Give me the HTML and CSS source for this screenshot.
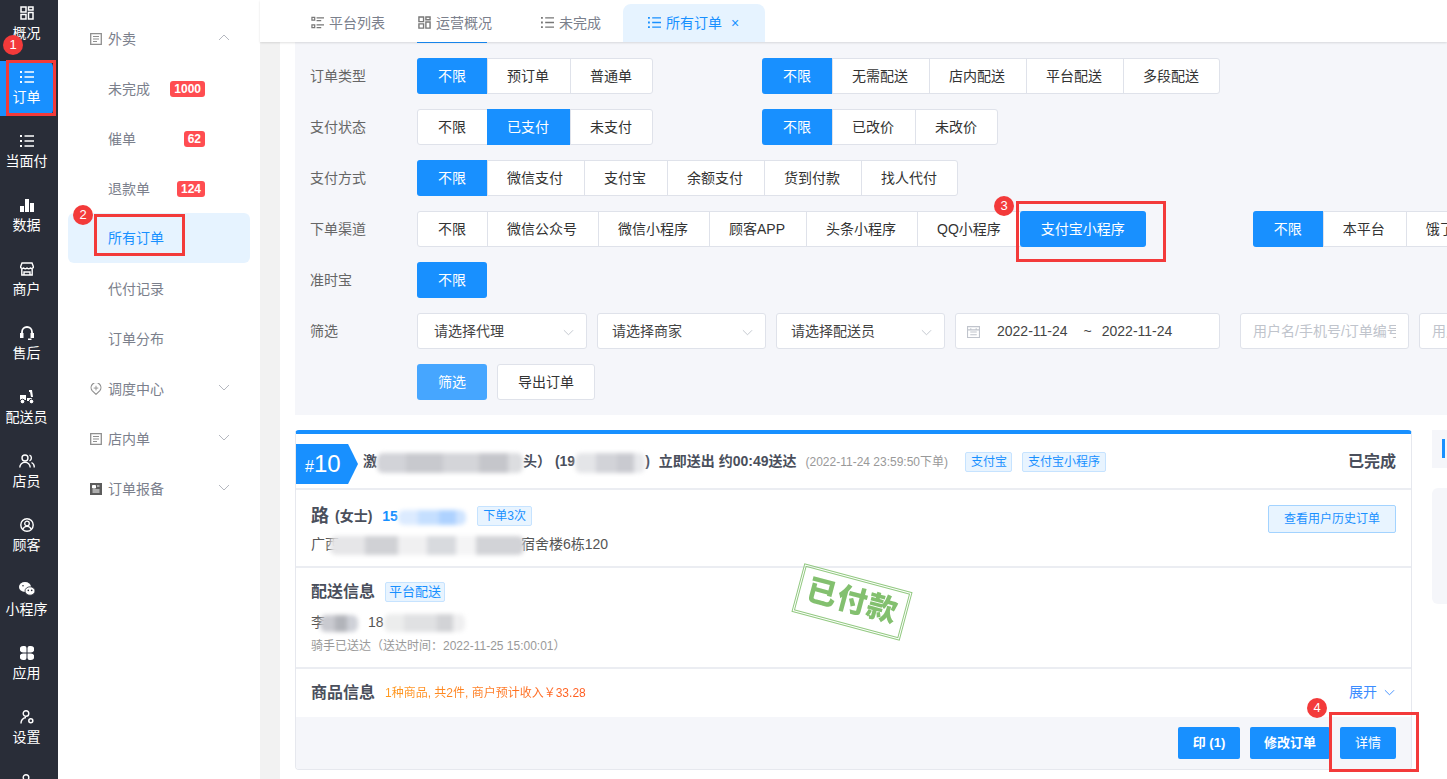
FILE: index.html
```html
<!DOCTYPE html>
<html lang="zh-CN">
<head>
<meta charset="utf-8">
<title>所有订单</title>
<link rel="stylesheet" href="styles.css">
</head>
<body>
<svg class="defs" aria-hidden="true">
  <symbol id="i-grid" viewBox="0 0 14 14"><path d="M1 1h5v5H1zM8.500 1H13v3H8.500zM8.500 6.500H13V13H8.500zM1 8.500h5V13H1z" fill="none" stroke="currentColor" stroke-width="1.500"/></symbol>
  <symbol id="i-list" viewBox="0 0 14 14"><path d="M4.500 2H14M4.500 7H14M4.500 12H14" stroke="currentColor" stroke-width="1.500"/><path d="M0 1h2v2H0zM0 6h2v2H0zM0 11h2v2H0z" fill="currentColor"/></symbol>
  <symbol id="i-rows" viewBox="0 0 14 14"><path d="M1 1.500h3v3H1zM1 9.500h3v3H1z" fill="none" stroke="currentColor" stroke-width="1.300"/><path d="M6 2h8M6 5h5M6 9.500h8M6 12.500h5" stroke="currentColor" stroke-width="1.300"/></symbol>
  <symbol id="i-bars" viewBox="0 0 14 14"><path d="M0 8h4v6H0zM5 1h4v13H5zM10 5h4v9h-4z" fill="currentColor"/></symbol>
  <symbol id="i-shop" viewBox="0 0 14 14"><path d="M2 1h10l1.500 4a2 2 0 0 1-3.200 1 2.400 2.400 0 0 1-3.300 0 2.400 2.400 0 0 1-3.300 0A2 2 0 0 1 .5 5zM1.800 7v6h10.400V7M4 13v-3h6v3" fill="none" stroke="currentColor" stroke-width="1.400"/></symbol>
  <symbol id="i-head" viewBox="0 0 14 14"><path d="M2 8V6a5 5 0 0 1 10 0v2" fill="none" stroke="currentColor" stroke-width="1.800"/><path d="M0 7h3.500v5H0zM10.500 7H14v5h-3.500zM8 12.500h3.500V14H8z" fill="currentColor"/></symbol>
  <symbol id="i-ride" viewBox="0 0 16 14"><path d="M1 5h6v5H1zM10 0h3l1 7h-2l-1-5h-1zM8 8h5v3H8z" fill="currentColor"/><circle cx="3.500" cy="11.500" r="2.300" fill="currentColor" stroke="#292d38"/><circle cx="12.500" cy="11.500" r="2.300" fill="currentColor" stroke="#292d38"/></symbol>
  <symbol id="i-users" viewBox="0 0 16 14"><circle cx="6" cy="4" r="3" fill="none" stroke="currentColor" stroke-width="1.400"/><path d="M.8 13.500a5.200 5.200 0 0 1 10.400 0M10.500 1.200a3 3 0 0 1 0 5.600M12.500 8.500a5 5 0 0 1 2.700 5" fill="none" stroke="currentColor" stroke-width="1.400"/></symbol>
  <symbol id="i-cust" viewBox="0 0 14 14"><circle cx="7" cy="7" r="6.200" fill="none" stroke="currentColor" stroke-width="1.400"/><circle cx="7" cy="5.500" r="2.300" fill="none" stroke="currentColor" stroke-width="1.300"/><path d="M3 11a4.300 4.300 0 0 1 8 0" fill="none" stroke="currentColor" stroke-width="1.300"/></symbol>
  <symbol id="i-chat" viewBox="0 0 16 14"><ellipse cx="6" cy="5" rx="6" ry="5" fill="currentColor"/><ellipse cx="11" cy="9" rx="5" ry="4.200" fill="currentColor" stroke="#292d38" stroke-width=".8"/><circle cx="9.300" cy="8.400" r=".8" fill="#292d38"/><circle cx="12.700" cy="8.400" r=".8" fill="#292d38"/><circle cx="4" cy="3.800" r=".8" fill="#292d38"/></symbol>
  <symbol id="i-apps" viewBox="0 0 14 14"><path d="M3 0h1.500a2 2 0 0 1 2 2v4.500H3a3 3 0 0 1 0-6.500zM11 0H9.500a2 2 0 0 0-2 2v4.500H11A3 3 0 0 0 11 0zM3 14h1.500a2 2 0 0 0 2-2V7.500H3A3 3 0 0 0 3 14zM11 14H9.500a2 2 0 0 1-2-2V7.500H11a3 3 0 0 1 0 6.500z" fill="currentColor"/></symbol>
  <symbol id="i-set" viewBox="0 0 14 14"><circle cx="6" cy="3.500" r="2.800" fill="none" stroke="currentColor" stroke-width="1.400"/><path d="M1 13.500a5.500 5.500 0 0 1 5-6" fill="none" stroke="currentColor" stroke-width="1.400"/><circle cx="10.800" cy="10.800" r="2" fill="none" stroke="currentColor" stroke-width="1.500"/></symbol>
  <symbol id="i-doc" viewBox="0 0 12 12"><path d="M.7.7h10.600v10.600H.7z" fill="none" stroke="currentColor" stroke-width="1.300"/><path d="M3 3.500h6M3 6h6M3 8.500h4" stroke="currentColor" stroke-width="1"/></symbol>
  <symbol id="i-pin" viewBox="0 0 12 13"><path d="M6 12.300 1.800 8.200a5.300 5.300 0 1 1 8.400 0z" fill="none" stroke="currentColor" stroke-width="1.200"/><path d="M3.500 5.500h5M6 3v5" stroke="currentColor" stroke-width="1"/></symbol>
  <symbol id="i-report" viewBox="0 0 12 12"><path d="M0 0h12v12H0z" fill="currentColor"/><path d="M2.500 2.500h3v2.500h-3zM7 3h2.500M2.500 7h7M2.500 9h7" stroke="#fff" fill="#fff" stroke-width="1"/></symbol>
  <symbol id="i-down" viewBox="0 0 12 7"><path d="M1 1l5 5 5-5" fill="none" stroke="currentColor" stroke-width="1"/></symbol>
  <symbol id="i-up" viewBox="0 0 12 7"><path d="M1 6l5-5 5 5" fill="none" stroke="currentColor" stroke-width="1"/></symbol>
  <symbol id="i-cal" viewBox="0 0 12 12"><path d="M.5 1.500h11v10H.5zM.5 4.500h11M3 3.500h1M8 3.500h1M3 6.500h6M3 9h6" fill="none" stroke="currentColor" stroke-width="1"/></symbol>
</svg>

<div class="app">
  <nav class="rail">
    <a class="rail-item"><svg class="rail-ico"><use href="#i-grid"/></svg>概况</a>
    <a class="rail-item is-active"><svg class="rail-ico"><use href="#i-list"/></svg>订单</a>
    <a class="rail-item"><svg class="rail-ico"><use href="#i-list"/></svg>当面付</a>
    <a class="rail-item"><svg class="rail-ico"><use href="#i-bars"/></svg>数据</a>
    <a class="rail-item"><svg class="rail-ico"><use href="#i-shop"/></svg>商户</a>
    <a class="rail-item"><svg class="rail-ico"><use href="#i-head"/></svg>售后</a>
    <a class="rail-item"><svg class="rail-ico rail-ico-w"><use href="#i-ride"/></svg>配送员</a>
    <a class="rail-item"><svg class="rail-ico rail-ico-w"><use href="#i-users"/></svg>店员</a>
    <a class="rail-item"><svg class="rail-ico"><use href="#i-cust"/></svg>顾客</a>
    <a class="rail-item"><svg class="rail-ico rail-ico-w"><use href="#i-chat"/></svg>小程序</a>
    <a class="rail-item"><svg class="rail-ico"><use href="#i-apps"/></svg>应用</a>
    <a class="rail-item"><svg class="rail-ico"><use href="#i-set"/></svg>设置</a>
    <a class="rail-item"><svg class="rail-ico"><use href="#i-set"/></svg></a>
  </nav>

  <aside class="subnav">
    <div class="sub-item sub-head"><svg class="sub-ico"><use href="#i-doc"/></svg>外卖<svg class="chev"><use href="#i-up"/></svg></div>
    <div class="sub-item sub-child">未完成<span class="badge">1000</span></div>
    <div class="sub-item sub-child">催单<span class="badge">62</span></div>
    <div class="sub-item sub-child">退款单<span class="badge">124</span></div>
    <div class="sub-item sub-child is-current">所有订单</div>
    <div class="sub-item sub-child">代付记录</div>
    <div class="sub-item sub-child">订单分布</div>
    <div class="sub-item sub-head"><svg class="sub-ico"><use href="#i-pin"/></svg>调度中心<svg class="chev"><use href="#i-down"/></svg></div>
    <div class="sub-item sub-head"><svg class="sub-ico"><use href="#i-doc"/></svg>店内单<svg class="chev"><use href="#i-down"/></svg></div>
    <div class="sub-item sub-head"><svg class="sub-ico sub-ico-dark"><use href="#i-report"/></svg>订单报备<svg class="chev"><use href="#i-down"/></svg></div>
  </aside>

  <main class="main">
    <div class="tabs">
      <div class="tab tab-a"><svg class="tab-ico"><use href="#i-rows"/></svg>平台列表</div>
      <div class="tab tab-b"><svg class="tab-ico"><use href="#i-grid"/></svg>运营概况</div>
      <div class="tab tab-c"><svg class="tab-ico"><use href="#i-list"/></svg>未完成</div>
      <div class="tab tab-on"><svg class="tab-ico"><use href="#i-list"/></svg>所有订单<span class="tab-x">×</span></div>
    </div>
    <div class="body">
      <div class="gutter"></div>
      <div class="page">
        <section class="filters">
          <div class="edge"></div>
          <div class="row">
            <div class="label">订单类型</div>
            <div class="seg"><span class="opt on">不限</span><span class="opt">预订单</span><span class="opt">普通单</span></div>
            <div class="seg"><span class="opt on">不限</span><span class="opt">无需配送</span><span class="opt">店内配送</span><span class="opt">平台配送</span><span class="opt">多段配送</span></div>
          </div>
          <div class="row">
            <div class="label">支付状态</div>
            <div class="seg"><span class="opt">不限</span><span class="opt on">已支付</span><span class="opt">未支付</span></div>
            <div class="seg"><span class="opt on">不限</span><span class="opt">已改价</span><span class="opt">未改价</span></div>
          </div>
          <div class="row">
            <div class="label">支付方式</div>
            <div class="seg"><span class="opt on">不限</span><span class="opt">微信支付</span><span class="opt">支付宝</span><span class="opt">余额支付</span><span class="opt">货到付款</span><span class="opt">找人代付</span></div>
          </div>
          <div class="row row-channel">
            <div class="label">下单渠道</div>
            <div class="seg"><span class="opt">不限</span><span class="opt">微信公众号</span><span class="opt">微信小程序</span><span class="opt">顾客APP</span><span class="opt">头条小程序</span><span class="opt">QQ小程序</span><span class="opt on opt-end">支付宝小程序</span></div>
            <div class="seg"><span class="opt on">不限</span><span class="opt">本平台</span><span class="opt">饿了么</span></div>
          </div>
          <div class="row">
            <div class="label">准时宝</div>
            <div class="seg"><span class="opt on solo">不限</span></div>
          </div>
          <div class="row">
            <div class="label">筛选</div>
            <div class="field field-first">请选择代理<svg class="field-chev"><use href="#i-down"/></svg></div>
            <div class="field">请选择商家<svg class="field-chev"><use href="#i-down"/></svg></div>
            <div class="field">请选择配送员<svg class="field-chev"><use href="#i-down"/></svg></div>
            <div class="field field-date"><svg class="cal"><use href="#i-cal"/></svg><span>2022-11-24</span><span class="tilde">~</span><span>2022-11-24</span></div>
            <div class="field field-input field-gap"><span class="clip">用户名/手机号/订单编号</span></div>
            <div class="field field-input"><span class="clip">用户名/手机号/订单编号</span></div>
          </div>
          <div class="row">
            <div class="label"></div>
            <button class="btn btn-soft">筛选</button>
            <button class="btn btn-line">导出订单</button>
          </div>
        </section>

        <div class="orders">
          <article class="card">
            <header class="c-head">
              <div class="flag"><small>#</small>10</div>
              <div class="c-title">激<i class="mask mask-a"></i>头） (19<i class="mask mask-b"></i>)<span class="c-when">立即送出 约00:49送达</span></div>
              <span class="c-date">(2022-11-24 23:59:50下单)</span>
              <span class="tag tag-a">支付宝</span>
              <span class="tag">支付宝小程序</span>
              <span class="c-status">已完成</span>
            </header>
            <section class="c-user">
              <div class="u-main">
                <div class="u-line"><b class="u-name">路</b><b class="u-sex">(女士)</b><b class="u-phone">15<i class="mask mask-c"></i></b><span class="tag tag-blue">下单3次</span></div>
                <div class="u-addr">广西<i class="mask mask-d"></i>宿舍楼6栋120</div>
              </div>
              <button class="hist">查看用户历史订单</button>
            </section>
            <section class="c-ship">
              <div class="s-title"><h3>配送信息</h3><span class="tag tag-ship">平台配送</span></div>
              <div class="s-person">李<i class="mask mask-e"></i><span class="s-phone">18<i class="mask mask-f"></i></span></div>
              <div class="s-note">骑手已送达（送达时间：2022-11-25 15:00:01）</div>
            </section>
            <section class="c-goods">
              <h3>商品信息</h3>
              <span class="g-sum">1种商品, 共2件, 商户预计收入￥33.28</span>
              <span class="g-more">展开<svg class="g-chev"><use href="#i-down"/></svg></span>
            </section>
            <footer class="c-foot">
              <button class="act act-print">印 (1)</button>
              <button class="act act-edit">修改订单</button>
              <button class="act act-detail">详情</button>
            </footer>
            <div class="stamp"><span>已付款</span></div>
          </article>
          <aside class="side">
            <div class="side-top"><i></i></div>
            <div class="side-box"></div>
          </aside>
        </div>
      </div>
    </div>
  </main>
</div>

<div class="mark mark-1"></div><div class="num num-1">1</div>
<div class="mark mark-2"></div><div class="num num-2">2</div>
<div class="mark mark-3"></div><div class="num num-3">3</div>
<div class="mark mark-4"></div><div class="num num-4">4</div>
</body>
</html>
```

FILE: styles.css
```css
* { box-sizing: border-box; }
html, body { margin: 0; height: 100%; overflow: hidden; background: #fff; }
body { font: 14px/20px "Liberation Sans", "Noto Sans CJK SC", sans-serif; color: #333; position: relative; }
i { font-style: normal; }
h3 { margin: 0; font-size: 16px; font-weight: 700; color: #4a4f5c; line-height: 22px; }
button { font: inherit; cursor: pointer; }
.defs { position: absolute; width: 0; height: 0; }

.app { display: flex; height: 779px; overflow: hidden; }

/* icon rail */
.rail { width: 58px; flex: none; background: #292d38; color: #fff; overflow: hidden; }
.rail-item { display: flex; flex-direction: column; align-items: center; height: 64px; width: 53px; padding-top: 9px; font-size: 14px; line-height: 20px; border-radius: 0 6px 6px 0; }
.rail-item:first-child { margin-top: -1px; height: 62px; padding-top: 7px; }
.rail-item.is-active { background: #1890ff; height: 55px; margin-bottom: 9px; }
.rail-ico { width: 14px; height: 14px; margin-bottom: 3px; }
.rail-ico-w { width: 16px; }

/* sub navigation */
.subnav { width: 202px; flex: none; background: #fff; padding: 14px 10px 0; }
.sub-item { height: 50px; display: flex; align-items: center; color: #7b808c; position: relative; border-radius: 6px; }
.sub-head { padding-left: 22px; }
.sub-child { padding-left: 40px; }
.sub-ico { width: 12px; height: 12px; margin-right: 6px; color: #8f8f8f; }
.sub-ico-dark { color: #5c5c5c; }
.chev { position: absolute; left: 150px; top: 20px; width: 12px; height: 7px; color: #b4b7bf; }
.badge { position: absolute; right: 45px; top: 17px; height: 16px; padding: 0 4px; background: #ff4d51; color: #fff; font-size: 12px; font-weight: 700; line-height: 16px; border-radius: 3px; }
.is-current { background: #e6f3ff; color: #1890ff; margin: -1px 0 1px; }

/* main */
.main { flex: 1; min-width: 0; display: flex; flex-direction: column; }
.tabs { height: 42px; flex: none; display: flex; align-items: flex-end; background: #fff; box-shadow: 0 1px 2px rgba(0, 0, 0, .12); position: relative; z-index: 1; }
.tab { height: 38px; display: flex; align-items: center; color: #7b808c; padding-bottom: 1px; }
.tab-ico { width: 13px; height: 13px; margin-right: 5px; color: #777; }
.tab-a { margin-left: 51px; }
.tab-b { margin-left: 33px; }
.tab-c { margin-left: 49px; }
.tab-on { margin-left: 22px; width: 142px; padding-left: 25px; background: #e6f3ff; color: #1890ff; border-radius: 8px 8px 0 0; }
.tab-on .tab-ico { color: #1890ff; }
.tab-x { margin-left: 9px; font-size: 14px; }

.body { flex: 1; display: flex; min-height: 0; }
.gutter { width: 20px; flex: none; background: #f2f2f2; }
.page { flex: 1; min-width: 0; padding-left: 15px; overflow: hidden; }

/* filter panel */
.filters { background: #f5f6fa; padding-bottom: 15px; height: 373px; }
.edge { width: 70px; height: 1px; margin: 0 0 15px 122px; background: #1890ff; }
.row { display: flex; align-items: center; height: 36px; margin-bottom: 15px; padding-left: 15px; white-space: nowrap; }
.row:last-child { margin-bottom: 0; }
.label { width: 107px; flex: none; color: #666; }
.seg + .seg { margin-left: 109px; }
.row-channel .seg + .seg { margin-left: 107px; }

.seg { display: flex; flex: none; height: 36px; background: #fff; border: 1px solid #dfe2ea; border-radius: 3px; }
.opt { display: flex; align-items: center; justify-content: center; padding: 0 21px 0 19px; height: 34px; color: #333; border-left: 1px solid #dfe2ea; }
.opt:last-child { padding-right: 20px; }
.opt:first-child { border-left: 0; border-radius: 3px 0 0 3px; padding: 0 21px 0 20px; }
.opt.on { background: #1890ff; color: #fff; height: 36px; margin: -1px 0; border-left: 0; padding: 0 21px 0 20px; }
.opt:first-child.on { margin-left: -1px; padding: 0 21px; }
.opt.solo { border-radius: 3px; margin-right: -1px; }
.opt.opt-end { border-radius: 3px; margin-left: -2px; padding: 0 21px; margin-right: -1px; }

.field { flex: none; width: 169px; height: 36px; display: flex; align-items: center; padding-left: 14px; background: #fff; border: 1px solid #dfe2ea; border-radius: 3px; color: #444; position: relative; }
.field + .field { margin-left: 10px; }
.field-first { width: 170px; padding-left: 16px; }
.field-chev { position: absolute; right: 12px; top: 15px; width: 11px; height: 7px; color: #c0c4cc; }
.field-date { width: 265px; padding-left: 11px; }
.cal { width: 13px; height: 13px; margin-right: 17px; color: #c0c4cc; }
.tilde { margin: 0 10px 0 16px; }
.field + .field-gap { margin-left: 20px; }
.field-input { padding: 0 12px; color: #c0c4cc; overflow: hidden; }
.clip { display: block; overflow: hidden; white-space: nowrap; }

.btn { height: 36px; border-radius: 3px; padding: 0; }
.btn + .btn { margin-left: 10px; }
.btn-soft { width: 70px; background: #46a6ff; border: 0; color: #fff; }
.btn-line { width: 98px; background: #fff; border: 1px solid #dfe2ea; color: #333; }

/* order card */
.orders { display: flex; gap: 20px; margin-top: 15px; align-items: flex-start; }
.card { width: 1117px; flex: none; height: 340px; border: 1px solid #e6e8ee; border-top: 4px solid #1890ff; border-radius: 4px; position: relative; display: flex; flex-direction: column; overflow: hidden; }
.c-head { height: 56px; flex: none; display: flex; align-items: center; border-bottom: 2px solid #ebedf2; white-space: nowrap; padding-top: 2px; }
.flag { width: 62px; height: 40px; margin-top: 4px; padding-left: 9px; background: #1890ff; color: #fff; font-size: 24px; line-height: 40px; clip-path: polygon(0 0, 84% 0, 100% 50%, 84% 100%, 0 100%); }
.flag small { font-size: 16px; }
.c-title { margin-left: 5px; font-weight: 700; color: #4a4f5c; white-space: pre; }
.c-when { margin-left: 9px; }
.c-date { margin-left: 9px; font-size: 12px; color: #999; }
.tag { display: inline-block; height: 20px; padding: 0 5px; border: 1px solid #c6e3ff; background: #e8f4ff; color: #1890ff; font-size: 12px; line-height: 18px; border-radius: 2px; }
.tag-a { width: 47px; margin-left: 17px; margin-right: 10px; }
.tag-blue { width: 55px; }
.c-status { margin-left: auto; margin-right: 15px; font-size: 16px; font-weight: 700; color: #4a4f5c; }

.mask { display: inline-block; vertical-align: middle; filter: blur(2px); border-radius: 6px; position: relative; z-index: 1; }
.mask-a { width: 146px; height: 20px; background: linear-gradient(90deg, #d2d3d8 0 20%, #c8c9ce 20% 45%, #d4d5d9 45% 70%, #c5c6cb 70% 90%, #dcdde0 90%); }
.mask-b { width: 70px; height: 20px; background: linear-gradient(90deg, #e4e5e8 0 30%, #d2d3d8 30% 60%, #c9cad0 60% 85%, #e8e9ec 85%); }
.mask-c { width: 68px; height: 15px; background: linear-gradient(90deg, #dcebff 0 30%, #c5dfff 30% 60%, #aed2ff 60% 85%, #cfe4ff 85%); }
.mask-d { width: 194px; height: 19px; margin: 0 -3px 0 -9px; background: linear-gradient(90deg, #e6e6e8 0 18%, #d0d1d5 18% 35%, #f0f0f1 35% 50%, #d8dade 50% 65%, #f4f4f5 65% 75%, #d2d3d7 75%); }
.mask-e { width: 38px; height: 17px; margin-left: -5px; background: linear-gradient(90deg, #c9cad0 0 40%, #b2b4ba 40% 70%, #cfd1d8 70%); }
.mask-f { width: 81px; height: 18px; background: linear-gradient(90deg, #eceded 0 25%, #e0e1e3 25% 65%, #d2d3d6 65% 85%, #efeff0 85%); }

.c-user { height: 78px; flex: none; display: flex; justify-content: space-between; padding: 15px 15px 0; border-bottom: 2px solid #ebedf2; }
.u-line { display: flex; align-items: center; height: 22px; }
.u-name { font-size: 18px; color: #4a4f5c; margin-right: 6px; }
.u-sex { font-size: 14px; color: #4a4f5c; margin-right: 10px; }
.u-phone { color: #1890ff; width: 95px; white-space: nowrap; }
.u-addr { margin-top: 7px; color: #555; white-space: nowrap; }
.hist { width: 128px; height: 28px; padding: 0; background: #e8f4ff; border: 1px solid #a3d3ff; color: #1890ff; font-size: 12px; border-radius: 2px; }

.c-ship { height: 101px; flex: none; padding: 13px 15px 0; border-bottom: 2px solid #ebedf2; }
.s-title { display: flex; align-items: center; gap: 10px; height: 22px; }
.tag-ship { padding: 0 3px; font-size: 13px; }
.s-person { margin-top: 9px; color: #555; white-space: nowrap; }
.s-phone { margin-left: 10px; }
.s-note { margin-top: 4px; font-size: 12px; color: #999; }

.c-goods { height: 48px; flex: none; display: flex; align-items: center; padding: 0 16px 0 15px; }
.g-sum { margin-left: 10px; font-size: 12px; background: linear-gradient(90deg, #ff9a1f, #ff5a1f); -webkit-background-clip: text; background-clip: text; color: transparent; }
.g-more { margin: -2px 0 0 auto; color: #3c8cff; display: flex; align-items: center; gap: 7px; }
.g-chev { width: 11px; height: 7px; }

.c-foot { flex: 1; background: #f5f6fa; display: flex; justify-content: flex-end; align-items: flex-start; gap: 10px; padding: 10px 15px 0 0; }
.act { height: 32px; padding: 0; background: #1890ff; border: 0; color: #fff; font-size: 13px; border-radius: 2px; }
.act-print { width: 62px; font-weight: 700; }
.act-edit { width: 80px; font-weight: 700; }
.act-detail { width: 56px; }

.stamp { position: absolute; left: 500px; top: 143px; width: 112px; height: 50px; border: 3px double #8cc67a; color: #7dbd68; font-size: 30px; font-weight: 900; line-height: 42px; text-align: center; letter-spacing: 1px; transform: rotate(15deg); opacity: .95; overflow: hidden; }

/* side column */
.side { flex: 1; }
.side-top { height: 38px; background: #f5f6fa; padding: 9px 0 0 10px; }
.side-top i { display: block; width: 3px; height: 19px; background: #1890ff; }
.side-box { height: 116px; margin-top: 20px; background: #f5f6fa; border-radius: 6px 0 0 6px; }

/* annotations drawn over the page */
.mark { position: absolute; border: 3px solid #f33a3a; }
.mark-1 { left: 6px; top: 60px; width: 50px; height: 56px; }
.mark-2 { left: 94px; top: 214px; width: 91px; height: 42px; }
.mark-3 { left: 1016px; top: 201px; width: 150px; height: 61px; }
.mark-4 { left: 1329px; top: 712px; width: 90px; height: 60px; }
.num { position: absolute; width: 20px; height: 20px; border-radius: 50%; background: #f33a3a; color: #fff; font-size: 13px; line-height: 20px; text-align: center; }
.num-1 { left: 3px; top: 35px; }
.num-2 { left: 73px; top: 205px; }
.num-3 { left: 994px; top: 196px; }
.num-4 { left: 1307px; top: 698px; }
```
